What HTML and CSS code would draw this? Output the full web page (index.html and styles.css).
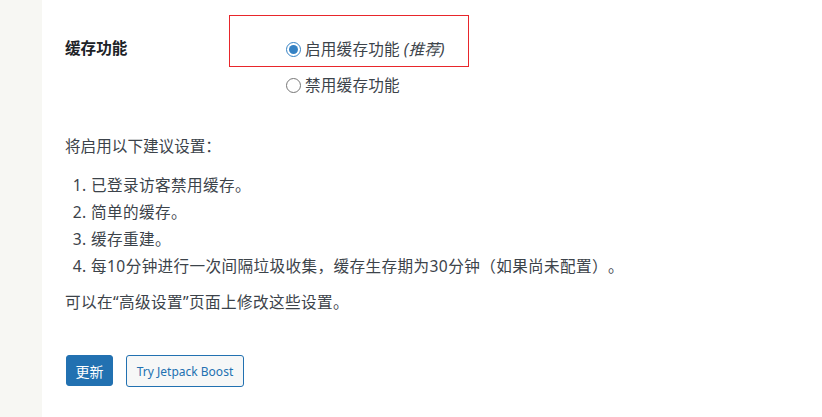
FILE: index.html
```html
<!DOCTYPE html>
<html lang="zh-CN">
<head>
  <meta charset="UTF-8" />
  <title>缓存设置</title>
  <link rel="stylesheet" href="styles.css">
</head>
<body>
  <div class="layout">
    <div class="sidebar"></div>
    <main class="content">
      <form class="settings">
        <div class="form-row">
          <div class="form-label">缓存功能</div>
          <fieldset class="form-field">
            <label class="radio"><input type="radio" name="caching" checked> 启用缓存功能 <em>(推荐)</em></label>
            <label class="radio"><input type="radio" name="caching"> 禁用缓存功能</label>
          </fieldset>
          <div class="highlight"></div>
        </div>

        <p class="intro">将启用以下建议设置：</p>
        <ol class="steps">
          <li>已登录访客禁用缓存。</li>
          <li>简单的缓存。</li>
          <li>缓存重建。</li>
          <li>每10分钟进行一次间隔垃圾收集，缓存生存期为30分钟（如果尚未配置）。</li>
        </ol>
        <p class="note">可以在“高级设置”页面上修改这些设置。</p>

        <div class="actions">
          <button type="submit" class="btn btn-primary">更新</button>
          <button type="button" class="btn btn-secondary">Try Jetpack Boost</button>
        </div>
      </form>
    </main>
  </div>
</body>
</html>
```

FILE: styles.css
```css
* {
  box-sizing: border-box;
}
html, body {
  margin: 0;
  height: 100%;
}
body {
  font-family: "Noto Sans", "Noto Sans CJK SC", sans-serif;
  font-size: 15.6px;
  color: #3c434a;
  background: #fff;
  text-spacing-trim: space-all;
}
.layout {
  display: flex;
  min-height: 100%;
}
.sidebar {
  width: 42px;
  flex-shrink: 0;
  background: #f7f7f3;
}
.content {
  flex: 1;
  padding: 20px 0 0 23px;
}
.form-row {
  position: relative;
  display: flex;
}
.form-label {
  width: 221px;
  font-weight: 700;
  color: #1d2327;
  line-height: 24px;
  padding-top: 16px;
}
.form-field {
  border: 0;
  margin: 0;
  padding: 17px 0 0;
  display: flex;
  flex-direction: column;
  gap: 12px;
}
.radio {
  display: flex;
  align-items: center;
  line-height: 24px;
  letter-spacing: 0.2px;
}
.radio em {
  margin-left: 4px;
}
.radio input {
  margin: 0 4px 0 0;
  width: 15px;
  height: 15px;
  accent-color: #3582c4;
}
.highlight {
  position: absolute;
  left: 164px;
  top: -5px;
  width: 240px;
  height: 52px;
  border: 1px solid #e8262b;
}
.intro {
  margin: 37px 0 0;
  line-height: 24px;
}
.steps {
  margin: 14px 0 0;
  padding-left: 26px;
  line-height: 27px;
  letter-spacing: 0.4px;
}
.note {
  margin: 10px 0 0;
  line-height: 24px;
  letter-spacing: 0.4px;
}
.actions {
  display: flex;
  align-items: flex-start;
  gap: 13px;
  margin: 41px 0 0 1px;
}
.btn {
  font-family: inherit;
  border-radius: 3px;
  padding: 0;
  white-space: nowrap;
  cursor: pointer;
}
.btn-primary {
  background: #2271b1;
  border: 1px solid #2271b1;
  color: #fff;
  height: 31px;
  width: 47px;
  font-size: 14px;
}
.btn-secondary {
  background: #f6f7f7;
  border: 1px solid #2271b1;
  color: #2271b1;
  height: 32px;
  width: 118px;
  font-size: 12px;
}
```
